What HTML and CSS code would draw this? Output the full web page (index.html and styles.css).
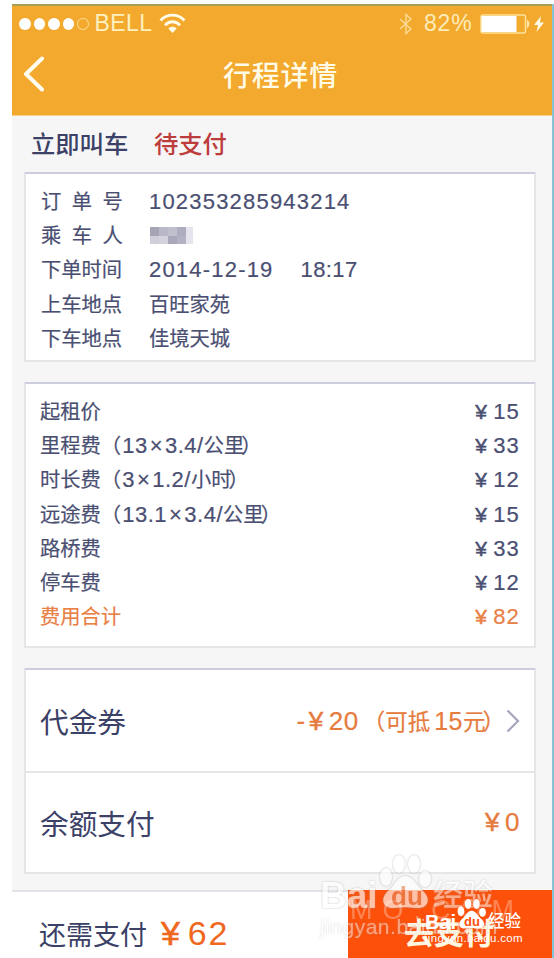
FILE: index.html
```html
<!DOCTYPE html>
<html lang="zh-CN">
<head>
    <meta charset="UTF-8">
    <meta name="viewport" content="width=device-width, initial-scale=1.0">
    <title>行程详情</title>
    <link rel="stylesheet" href="styles.css">
</head>
<body>
    <div class="phone">
        <header>
            <div class="status-bar">
                <div class="signal">
                    <i></i><i></i><i></i><i></i><i class="empty"></i>
                </div>
                <span class="carrier">BELL</span>
                <svg class="wifi" width="27" height="21" viewBox="0 0 27 21" fill="none" stroke="#fffbe6" stroke-width="2.8">
                    <path d="M1.5 7.5C8 .3 19 .3 25.5 7.5"/>
                    <path d="M6 12.2c4.2-4.6 10.8-4.6 15 0"/>
                    <path d="M13.5 20l-4.2-4.6c2.3-2.3 6.1-2.3 8.4 0z" fill="#fffbe6" stroke="none"/>
                </svg>
                <svg class="bluetooth" width="14" height="22" viewBox="0 0 14 22" fill="none" stroke="#fbdc96" stroke-width="1.4">
                    <path d="M1 6l11 10-5 4.5v-19l5 4.5L1 16"/>
                </svg>
                <span class="percent">82%</span>
                <svg class="battery" width="50" height="20" viewBox="0 0 50 20">
                    <rect x="1" y="1" width="44.5" height="18" rx="2" fill="none" stroke="#fde29b" stroke-width="1.5"/>
                    <rect x="1.5" y="2" width="35" height="16" fill="#fff"/>
                    <path d="M47 6c3 1 3 7 0 8z" fill="#fde9b0"/>
                </svg>
                <svg class="bolt" width="10" height="16" viewBox="0 0 10 16">
                    <path d="M7 0L0 9h4L2.5 16 10 6.5H6z" fill="#fffbe6"/>
                </svg>
            </div>
            <div class="title-bar">
                <svg class="back" width="22" height="36" viewBox="0 0 22 36" fill="none" stroke="#fffdf0" stroke-width="4" stroke-linecap="round" stroke-linejoin="round">
                    <path d="M19 2.5L3 18l16 15.5"/>
                </svg>
                <h1>行程详情</h1>
            </div>
        </header>

        <div class="order-status">
            <span>立即叫车</span>
            <span class="pending">待支付</span>
        </div>

        <div class="card info">
            <div class="row"><span class="label spread">订单号</span><span class="num">102353285943214</span></div>
            <div class="row">
                <span class="label spread">乘车人</span>
                <svg class="masked" width="46" height="20" viewBox="0 0 46 20">
                    <rect x="1" y="1" width="9" height="9" fill="#a6a5b6"/>
                    <rect x="1" y="10" width="9" height="8" fill="#cfced9"/>
                    <rect x="10" y="1" width="9" height="9" fill="#b9b8c9"/>
                    <rect x="10" y="10" width="9" height="8" fill="#d3d2dd"/>
                    <rect x="19" y="1" width="9" height="9" fill="#c0bfce"/>
                    <rect x="19" y="10" width="9" height="8" fill="#a9a8ba"/>
                    <rect x="28" y="1" width="9" height="9" fill="#aeadbf"/>
                    <rect x="28" y="10" width="9" height="8" fill="#b3b2c3"/>
                    <rect x="37" y="1" width="7" height="17" fill="#e6e5ee"/>
                </svg>
            </div>
            <div class="row"><span class="label">下单时间</span><span class="num">2014-12-19</span><span class="num clock">18:17</span></div>
            <div class="row"><span class="label">上车地点</span><span>百旺家苑</span></div>
            <div class="row"><span class="label">下车地点</span><span>佳境天城</span></div>
        </div>

        <div class="card fees">
            <div class="row"><span>起租价</span><span class="num price"><b>¥</b>15</span></div>
            <div class="row"><span>里程费<em class="open">（</em><span class="num">13<i>×</i>3.4/</span>公里<em class="close">）</em></span><span class="num price"><b>¥</b>33</span></div>
            <div class="row"><span>时长费<em class="open">（</em><span class="num">3<i>×</i>1.2/</span>小时<em class="close">）</em></span><span class="num price"><b>¥</b>12</span></div>
            <div class="row"><span>远途费<em class="open">（</em><span class="num">13.1<i>×</i>3.4/</span>公里<em class="close">）</em></span><span class="num price"><b>¥</b>15</span></div>
            <div class="row"><span>路桥费</span><span class="num price"><b>¥</b>33</span></div>
            <div class="row"><span>停车费</span><span class="num price"><b>¥</b>12</span></div>
            <div class="row total"><span>费用合计</span><span class="num price"><b>¥</b>82</span></div>
        </div>

        <div class="card pay">
            <div class="pay-row">
                <span>代金券</span>
                <span class="amount"><span class="big">-<b>¥</b>20</span><em class="open">（</em>可抵<span class="big small-gap">15</span>元<em class="close">）</em></span>
                <svg class="arrow" width="14" height="24" viewBox="0 0 14 24" fill="none" stroke="#a5a6bd" stroke-width="2.2">
                    <path d="M1.5 1.5L12 12 1.5 22.5"/>
                </svg>
            </div>
            <div class="pay-row">
                <span>余额支付</span>
                <span class="amount last"><span class="big"><b>¥</b>0</span></span>
            </div>
        </div>

        <footer>
            <div class="due">还需支付<span class="due-num"><b>¥</b>62</span></div>
            <div class="pay-button">去支付</div>
        </footer>
    </div>

    <!-- Watermarks over the footer -->
    <div class="mark mark-domain">MO.COM</div>
    <div class="mark mark-large">
        <svg class="paw" width="54" height="56" viewBox="0 0 54 56">
            <ellipse cx="7" cy="23" rx="6" ry="9"/>
            <ellipse cx="20" cy="10" rx="6" ry="9"/>
            <ellipse cx="35" cy="10" rx="6" ry="9"/>
            <ellipse cx="46" cy="25" rx="6" ry="8"/>
            <path d="M26 22c-8 0-10 10-18 16-8 9-2 17 7 16 8-1 14-1 22 0 10 1 16-7 8-16-8-6-10-16-19-16z"/>
        </svg>
        <span class="mark-bai">Bai</span>
        <span class="mark-du">du</span>
        <span class="mark-cn">经验</span>
        <span class="mark-url">jingyan.baidu.com</span>
    </div>
    <div class="mark mark-small">
        <svg class="paw" width="30" height="32" viewBox="0 0 54 56">
            <ellipse cx="7" cy="23" rx="6" ry="9"/>
            <ellipse cx="20" cy="10" rx="6" ry="9"/>
            <ellipse cx="35" cy="10" rx="6" ry="9"/>
            <ellipse cx="46" cy="25" rx="6" ry="8"/>
            <path d="M26 22c-8 0-10 10-18 16-8 9-2 17 7 16 8-1 14-1 22 0 10 1 16-7 8-16-8-6-10-16-19-16z"/>
        </svg>
        <span class="mark-bai">Bai</span>
        <span class="mark-du">du</span>
        <span class="mark-cn">经验</span>
        <span class="mark-url">jingyan.baidu.com</span>
    </div>
</body>
</html>
```
FILE: styles.css
```css
* {
    box-sizing: border-box;
}

body {
    margin: 0;
    padding: 4px 0 0 12px;
    height: 958px;
    overflow: hidden;
    background: #fff;
    color: #4a4f72;
    font-family: "Liberation Sans", "Noto Sans CJK SC", sans-serif;
}

i, b, em {
    font-style: normal;
    font-weight: normal;
}

.phone {
    display: flex;
    flex-direction: column;
    width: 542px;
    height: 954px;
    background: #f6f6f6;
    border-right: 2px solid #86c3d4;
}

header {
    flex-shrink: 0;
    height: 112px;
    background: #f3a92e;
    border-top: 2px solid #a6a052;
    border-bottom: 1px solid #f5cf8b;
    color: #fffbe6;
}

.status-bar {
    display: flex;
    align-items: center;
    height: 35px;
    padding: 0 8px 0 7px;
}

.signal {
    display: flex;
    gap: 3px;
    margin-right: 6px;
}

.signal i {
    width: 11.5px;
    height: 12px;
    border-radius: 50%;
    background: #fff;
}

.signal .empty {
    background: none;
    border: 1px solid #fbd98d;
}

.carrier {
    width: 58px;
    font-size: 23px;
    letter-spacing: 0.4px;
    color: #fff0c0;
}

.wifi {
    margin-left: 6px;
}

.bluetooth {
    margin-left: auto;
    margin-right: 11px;
}

.percent {
    width: 50px;
    font-size: 23px;
    letter-spacing: 0.8px;
    color: #fdecb9;
}

.battery {
    margin-left: 6px;
}

.bolt {
    margin-left: 4px;
}

.title-bar {
    display: flex;
    align-items: center;
    height: 66px;
    padding-left: 11px;
}

h1 {
    flex: 1;
    margin: 0 36px 0 0;
    text-align: center;
    font-size: 28px;
    font-weight: 500;
    letter-spacing: 0.7px;
}

.order-status {
    flex-shrink: 0;
    height: 56px;
    padding: 0 19px;
    line-height: 58px;
    font-size: 24.3px;
    font-weight: 500;
    color: #3c4167;
}

.pending {
    margin-left: 19px;
    color: #bd3c3c;
}

.card {
    flex-shrink: 0;
    margin: 0 16px 20px 12px;
    background: #fff;
    border: 2px solid #e6e6e8;
    border-top-color: #cdcde0;
}

.info {
    height: 190px;
    padding: 11px 15px 0;
}

.fees {
    height: 266px;
    padding: 11px 14px 0;
}

.row {
    display: flex;
    align-items: center;
    height: 34.2px;
    line-height: 34px;
    font-size: 20.3px;
    -webkit-text-stroke: 0.2px;
}

.label {
    width: 108px;
}

.spread {
    letter-spacing: 10.5px;
}

.num {
    font-size: 22px;
    letter-spacing: 1.2px;
}

.fees .num {
    letter-spacing: 0.5px;
}

.num i {
    margin: 0 2px;
}

.open {
    margin-right: 1px;
}

.close {
    margin-left: -3px;
}

.clock {
    margin-left: 27px;
    letter-spacing: 0.4px;
}

.fees .price {
    display: flex;
    margin-left: auto;
    letter-spacing: 1.2px;
}

.price b {
    width: 18px;
    font-size: 21px;
    -webkit-text-stroke: 0.5px;
}

.total {
    color: #e98045;
}

.pay {
    height: 206px;
    margin-bottom: 16px;
}

.pay-row {
    display: flex;
    align-items: center;
    height: 101px;
    padding: 0 14px;
    font-size: 28.7px;
    color: #3c4167;
}

.pay-row + .pay-row {
    border-top: 2px solid #e6e6e8;
}

.amount {
    margin-left: auto;
    font-size: 22.5px;
    color: #e67b3e;
    -webkit-text-stroke: 0.2px;
}

.amount .open {
    margin: 0 0 0 4px;
}

.big {
    font-size: 26px;
    letter-spacing: 0.5px;
}

.big b {
    margin: 0 5px 0 3px;
    -webkit-text-stroke: 0.5px;
}

.big.small-gap {
    margin-left: 4px;
    font-size: 25px;
}

.arrow {
    margin-left: 1px;
}

footer {
    display: flex;
    flex-shrink: 0;
    height: 68px;
    background: #fff;
    border-top: 2px solid #e2e2ea;
}

.due {
    width: 336px;
    padding-left: 27px;
    line-height: 83px;
    font-size: 27px;
    color: #3c4167;
}

.due-num {
    margin-left: 14px;
    font-size: 34px;
    letter-spacing: 1.8px;
    color: #f0681e;
}

.due-num b {
    margin-right: 6px;
    -webkit-text-stroke: 0.6px;
}

.pay-button {
    flex: 1;
    margin-top: -2px;
    padding-left: 56px;
    background: #fd500a;
    color: #fff6df;
    line-height: 88px;
    font-size: 30px;
    font-weight: bold;
}

.mark {
    position: absolute;
    color: #fff;
    white-space: nowrap;
    font-weight: bold;
}

.mark span,
.paw {
    position: absolute;
    line-height: 1;
}

.paw {
    fill: #fff;
}

.mark-domain {
    left: 350px;
    top: 896px;
    line-height: 28px;
    font-size: 27px;
    font-weight: normal;
    letter-spacing: 10px;
    opacity: 0.3;
}

.mark-large {
    left: 320px;
    top: 852px;
    opacity: 0.65;
    text-shadow: 0 0 2px #999;
}

.mark-large .paw {
    left: 59px;
    top: 2px;
    filter: drop-shadow(0 0 1px #999);
}

.mark-large .mark-bai {
    left: 0;
    top: 25px;
    font-size: 37px;
}

.mark-large .mark-du {
    left: 71px;
    top: 31px;
    font-size: 26px;
    color: #e98a5e;
    text-shadow: none;
}

.mark-large .mark-cn {
    left: 113px;
    top: 28px;
    font-size: 30px;
    font-weight: 500;
    opacity: 0.8;
}

.mark-large .mark-url {
    left: 0;
    top: 64px;
    font-size: 21px;
    font-weight: normal;
    letter-spacing: 0.5px;
    opacity: 0.75;
}

.mark-small {
    left: 425px;
    top: 898px;
}

.mark-small .paw {
    left: 32px;
    top: 0;
    filter: drop-shadow(0 0 1px #fd500a);
}

.mark-small .mark-bai {
    left: 0;
    top: 14px;
    font-size: 20px;
}

.mark-small .mark-du {
    left: 39px;
    top: 17px;
    font-size: 13px;
    color: #fd500a;
}

.mark-small .mark-cn {
    left: 63px;
    top: 15px;
    font-size: 16.5px;
    font-weight: 500;
}

.mark-small .mark-url {
    left: 0;
    top: 35px;
    font-size: 11.5px;
    font-weight: normal;
    letter-spacing: 0.3px;
}
```
